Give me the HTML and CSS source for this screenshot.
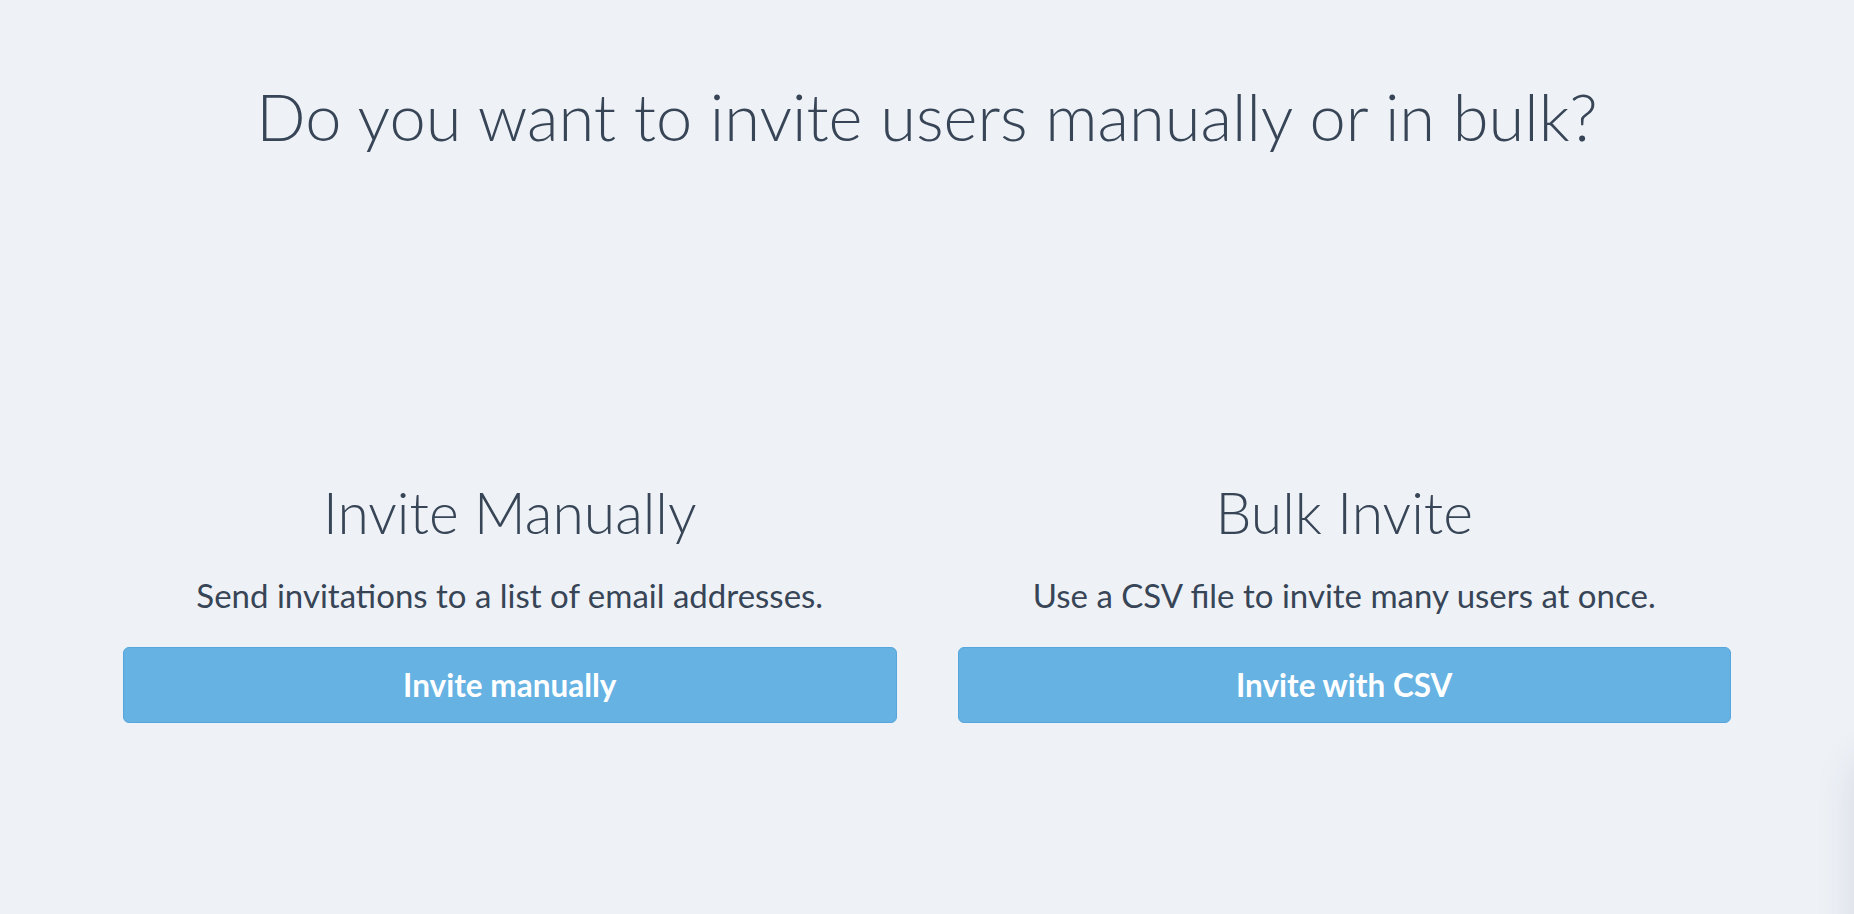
FILE: index.html
```html
<!DOCTYPE html>
<html lang="en">
<head>
  <meta charset="UTF-8">
  <title>Invite users</title>
  <link rel="stylesheet" href="styles.css">
</head>
<body>
<div id="app">
  <h1 class="title">Do you want to invite users manually or in bulk?</h1>

  <div class="options">
    <div class="option">
      <h2 class="option-title">Invite Manually</h2>
      <p class="option-desc">Send invitations to a list of email addresses.</p>
      <button class="btn">Invite manually</button>
    </div>
    <div class="option">
      <h2 class="option-title">Bulk Invite</h2>
      <p class="option-desc">Use a CSV file to invite many users at once.</p>
      <button class="btn">Invite with CSV</button>
    </div>
  </div>
</div>

<div class="edge-shadow"></div>
</body>
</html>
```

FILE: styles.css
```css
html, body {
  margin: 0;
  height: 100%;
}

body {
  background-color: #eef2f7;
  color: #374556;
  font-family: Lato, "Open Sans", sans-serif;
  overflow: hidden;
}

#app {
  width: 1608px;
  margin: 0 auto;
}

.title {
  margin: 0;
  padding-top: 76px;
  font-size: 65px;
  font-weight: 300;
  line-height: 80px;
  text-align: center;
}

.options {
  display: grid;
  grid-template-columns: 1fr 1fr;
  gap: 61px;
  margin-top: 326px;
}

.option {
  display: flex;
  flex-direction: column;
  align-items: center;
}

.option-title {
  margin: 0;
  font-size: 57px;
  font-weight: 300;
  line-height: 60px;
}

.option-desc {
  margin: 33px 0 32px;
  font-size: 33px;
  line-height: 40px;
}

.btn {
  width: 100%;
  height: 76px;
  border: 1px solid #56a6dd;
  border-radius: 6px;
  background-color: #65b2e3;
  color: #ffffff;
  font-family: Lato, "Open Sans", sans-serif;
  font-size: 31.5px;
  font-weight: 700;
  cursor: pointer;
}

.edge-shadow {
  position: fixed;
  right: -70px;
  bottom: -100px;
  width: 70px;
  height: 260px;
  border-radius: 30px;
  box-shadow: 0 0 40px rgba(40, 50, 70, .12);
}
```
